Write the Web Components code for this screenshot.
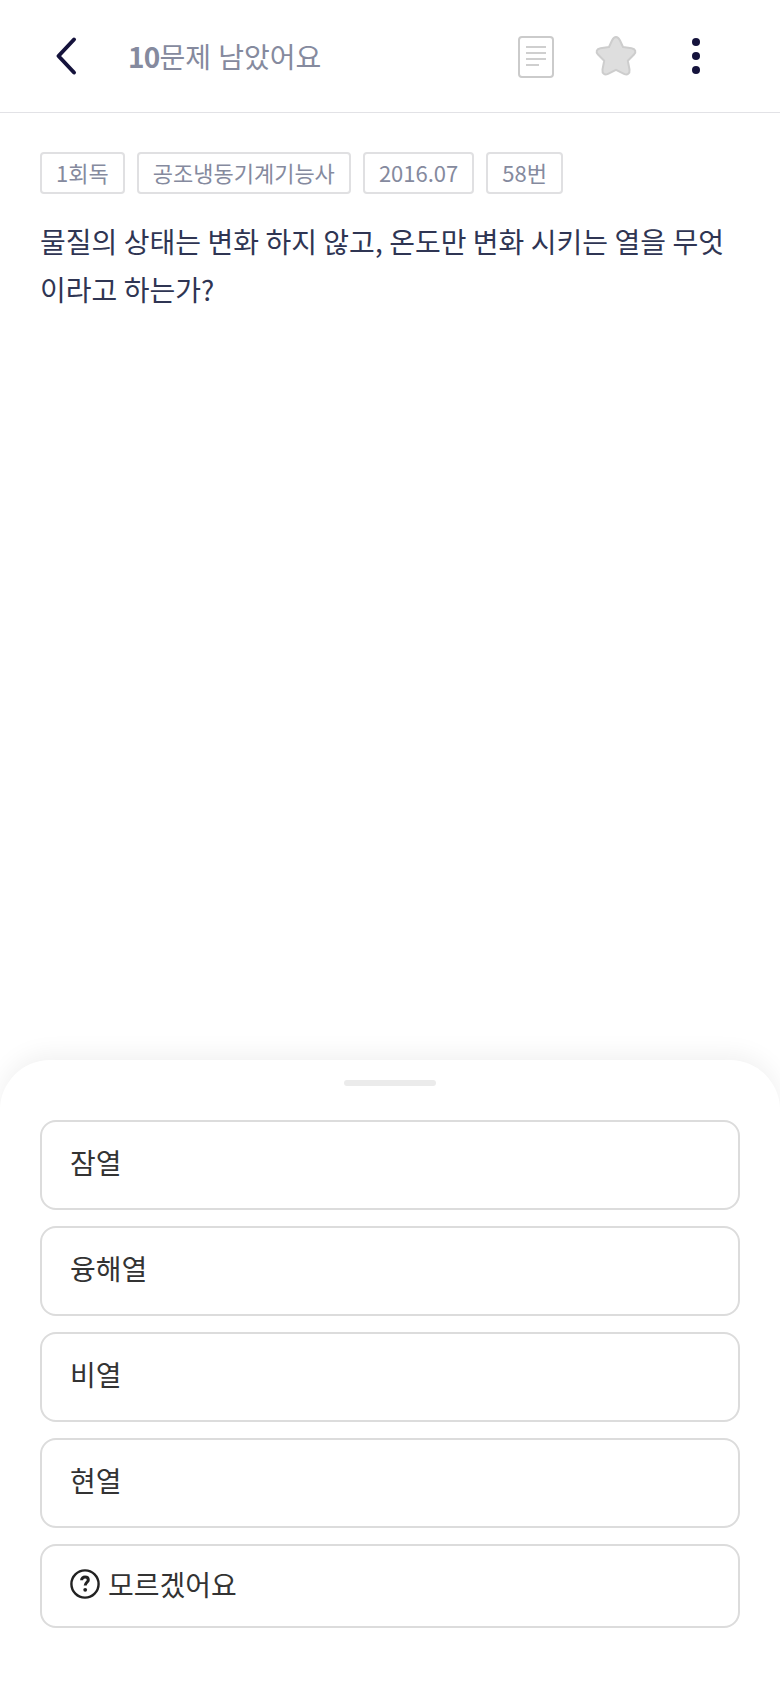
<!DOCTYPE html>
<html lang="ko">
<head>
<meta charset="utf-8">
<title>quiz</title>
<style>
  html, body { margin: 0; padding: 0; background: #fff; }
  body { font-family: "Noto Sans CJK KR", "Noto Sans", sans-serif; }
</style>
</head>
<body>
<quiz-page>
  <quiz-header slot="top" left="10" text="문제 남았어요"></quiz-header>
  <quiz-question slot="top">
    <tag-chip slot="tags">1회독</tag-chip>
    <tag-chip slot="tags">공조냉동기계기능사</tag-chip>
    <tag-chip slot="tags">2016.07</tag-chip>
    <tag-chip slot="tags">58번</tag-chip>
    물질의 상태는 변화 하지 않고, 온도만 변화 시키는 열을 무엇이라고 하는가?
  </quiz-question>
  <answer-sheet slot="bottom">
    <answer-option>잠열</answer-option>
    <answer-option>융해열</answer-option>
    <answer-option>비열</answer-option>
    <answer-option>현열</answer-option>
    <answer-option unknown>모르겠어요</answer-option>
  </answer-sheet>
</quiz-page>

<script>
class QuizPage extends HTMLElement {
  constructor() {
    super();
    this.attachShadow({ mode: "open" });
    this.shadowRoot.innerHTML = `
      <style>
        :host {
          display: flex;
          flex-direction: column;
          justify-content: space-between;
          height: 1688px;
          overflow: hidden;
          background: #fff;
        }
      </style>
      <div><slot name="top"></slot></div>
      <div><slot name="bottom"></slot></div>
    `;
  }
}

class QuizHeader extends HTMLElement {
  constructor() {
    super();
    this.attachShadow({ mode: "open" });
  }

  connectedCallback() {
    const left = this.getAttribute("left") || "";
    const text = this.getAttribute("text") || "";
    this.shadowRoot.innerHTML = `
      <style>
        :host {
          display: flex;
          align-items: center;
          box-sizing: border-box;
          height: 113px;
          padding: 0 0 0 48px;
          border-bottom: 1px solid #e2e2e6;
        }
        svg { display: block; flex: none; }
        .title {
          margin-left: 44px;
          font-size: 28px;
          line-height: 40px;
          word-spacing: -0.5px;
          color: #858a9e;
          white-space: nowrap;
          flex: 1;
        }
        b { font-weight: 700; letter-spacing: -0.8px; }
        .doc { margin: 2px 39px 0 0; }
        .star { margin-right: 54px; }
        .more { margin-right: 80px; }
      </style>
      <svg width="36" height="48" viewBox="0 0 36 48">
        <path d="M26 7.5 L10.5 24 L26 40.5" fill="none" stroke="#15133c" stroke-width="4" stroke-linecap="round" stroke-linejoin="round"/>
      </svg>
      <div class="title"><b>${left}</b>${text}</div>
      <svg class="doc" width="38" height="44" viewBox="0 0 38 44">
        <rect x="2" y="2" width="34" height="40" rx="3" fill="#fff" stroke="#cbcbcb" stroke-width="2"/>
        <path d="M9 12H29M9 18H29M9 24H29M9 30H22" stroke="#cfcfcf" stroke-width="2"/>
      </svg>
      <svg class="star" width="44" height="44" viewBox="0 0 44 44">
        <path d="M22 3 C24 3 25 4.5 26 6.5 L29 13 L37.5 14.3 C41.5 15 42.5 18 40 20.5 L33.8 26.7 L35.5 35.5 C36 39.5 33.5 41.5 30 39.8 L22 35.8 L14 39.8 C10.5 41.5 8 39.5 8.5 35.5 L10.2 26.7 L4 20.5 C1.5 18 2.5 15 6.5 14.3 L15 13 L18 6.5 C19 4.5 20 3 22 3 Z" fill="#dedede" stroke="#cdcdcd" stroke-width="2" stroke-linejoin="round"/>
      </svg>
      <svg class="more" width="8" height="38" viewBox="0 0 8 38">
        <circle cx="4" cy="5" r="4" fill="#15133c"/>
        <circle cx="4" cy="19" r="4" fill="#15133c"/>
        <circle cx="4" cy="33" r="4" fill="#15133c"/>
      </svg>
    `;
  }
}

class TagChip extends HTMLElement {
  constructor() {
    super();
    this.attachShadow({ mode: "open" });
    this.shadowRoot.innerHTML = `
      <style>
        :host {
          display: block;
          box-sizing: border-box;
          height: 42px;
          padding: 0 14px;
          border: 2px solid #e0e0e2;
          border-radius: 4px;
          font-size: 22px;
          line-height: 36px;
          color: #858a9e;
          white-space: nowrap;
        }
      </style>
      <slot></slot>
    `;
  }
}

class QuizQuestion extends HTMLElement {
  constructor() {
    super();
    this.attachShadow({ mode: "open" });
    this.shadowRoot.innerHTML = `
      <style>
        :host {
          display: block;
          padding: 39px 40px 0;
        }
        .tags { display: flex; gap: 12px; }
        .text {
          margin-top: 24px;
          font-size: 28px;
          line-height: 47.5px;
          word-spacing: -1.4px;
          color: #2f3553;
          word-break: break-all;
        }
      </style>
      <div class="tags"><slot name="tags"></slot></div>
      <div class="text"><slot></slot></div>
    `;
  }
}

class AnswerSheet extends HTMLElement {
  constructor() {
    super();
    this.attachShadow({ mode: "open" });
    this.shadowRoot.innerHTML = `
      <style>
        :host {
          display: block;
          box-sizing: border-box;
          height: 628px;
          padding: 20px 40px 0;
          background: #fff;
          border-radius: 50px 50px 0 0;
          box-shadow: 0 -6px 24px rgba(0, 0, 0, 0.06);
        }
        .handle {
          width: 92px;
          height: 6px;
          margin: 0 auto 34px;
          border-radius: 3px;
          background: #ebebeb;
        }
        .list { display: flex; flex-direction: column; gap: 16px; }
      </style>
      <div class="handle"></div>
      <div class="list"><slot></slot></div>
    `;
  }
}

class AnswerOption extends HTMLElement {
  constructor() {
    super();
    this.attachShadow({ mode: "open" });
  }

  connectedCallback() {
    const unknown = this.hasAttribute("unknown");
    this.shadowRoot.innerHTML = `
      <style>
        :host {
          display: flex;
          align-items: center;
          gap: 8px;
          box-sizing: border-box;
          height: ${unknown ? 84 : 90}px;
          padding: 0 28px ${unknown ? 5 : 6}px;
          border: 2px solid #dcdcdc;
          border-radius: 16px;
          font-size: 28px;
          line-height: 40px;
          color: #333;
        }
        svg { display: block; flex: none; }
      </style>
      ${unknown ? `
      <svg width="30" height="30" viewBox="0 0 30 30">
        <circle cx="15" cy="15" r="13.6" fill="none" stroke="#222" stroke-width="2.4"/>
        <path d="M11.6 11.2 C11.6 9.2 13.2 8 15 8 C16.9 8 18.3 9.2 18.3 10.9 C18.3 13.2 15.2 13.4 15.2 16.6" fill="none" stroke="#222" stroke-width="3"/>
        <circle cx="15.2" cy="20.8" r="1.9" fill="#222"/>
      </svg>` : ""}
      <span><slot></slot></span>
    `;
  }
}

customElements.define("quiz-page", QuizPage);
customElements.define("quiz-header", QuizHeader);
customElements.define("tag-chip", TagChip);
customElements.define("quiz-question", QuizQuestion);
customElements.define("answer-sheet", AnswerSheet);
customElements.define("answer-option", AnswerOption);
</script>
</body>
</html>
